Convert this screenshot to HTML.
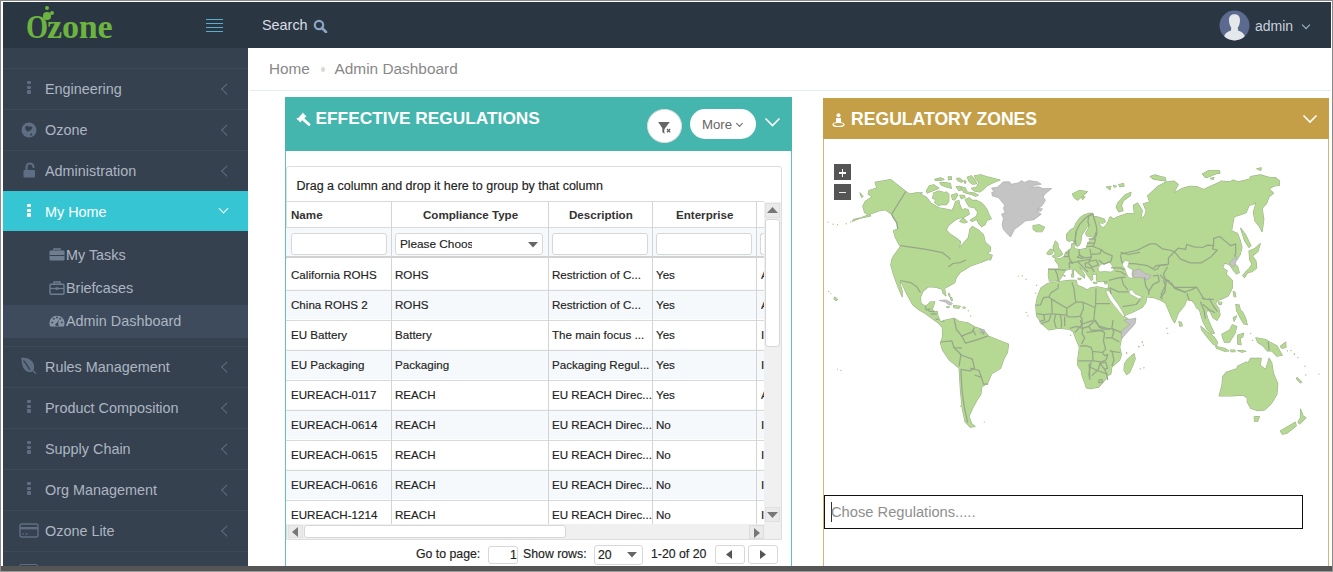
<!DOCTYPE html>
<html><head><meta charset="utf-8">
<style>
*{box-sizing:border-box;margin:0;padding:0}
html,body{width:1333px;height:572px;overflow:hidden;background:#fff;font-family:"Liberation Sans",sans-serif}
.abs{position:absolute}
#frame{position:absolute;left:0;top:0;width:1333px;height:572px;background:#fff;overflow:hidden}
#header{position:absolute;left:3px;top:2px;width:1328px;height:46px;background:#2b3643}
#sidebar{position:absolute;left:3px;top:48px;width:245px;height:518px;background:#364150;overflow:hidden}
.mi{position:absolute;left:0;width:245px;height:41px;border-top:1px solid #3d4957;color:#adb6c2;font-size:14.4px}
.mi .t{position:absolute;left:42px;top:12px;white-space:nowrap}
.mi .ch{position:absolute;left:219.5px;top:15.5px;width:7.5px;height:7.5px;border-left:1.1px solid #5f6e82;border-bottom:1.1px solid #5f6e82;transform:rotate(45deg)}
.dots{position:absolute;left:24px;top:12px;width:4px}
.dots i{display:block;width:3.6px;height:3.4px;background:#5f6e82;margin-bottom:1.2px;border-radius:1px}
.sub{position:absolute;left:0;width:245px;height:33px;color:#adb6c2;font-size:14.4px}
.sub .t{position:absolute;left:63px;top:8px;white-space:nowrap}
.g{position:absolute;font-size:11.6px;color:#222;white-space:nowrap;-webkit-text-stroke:0.15px #222}
.hd{position:absolute;font-size:11.6px;color:#333;font-weight:bold;white-space:nowrap}
.rowline{position:absolute;left:286px;width:478px;height:1px;background:#d9d9d9}
.vline{position:absolute;width:1px;background:#d4d4d4}
.fin{position:absolute;height:22px;border:1px solid #d8d8d8;border-radius:3px;background:#fff}
#bottomframe{position:absolute;left:0;top:566px;width:1333px;height:5px;background:#555}
</style></head><body><div id="frame">

<div id="header">
  <div class="abs" style="left:23.2px;top:9.2px;font-family:'Liberation Serif',serif;font-weight:bold;font-size:31px;color:#6cb33f;transform:scale(0.915,1.07);transform-origin:0 100%;line-height:36px">O</div>
  <div class="abs" style="left:44px;top:9.2px;font-family:'Liberation Serif',serif;font-weight:bold;font-size:31px;color:#6cb33f;transform:scale(1.10,1.07);transform-origin:0 100%;line-height:36px;letter-spacing:-0.2px">zone</div>
  <div class="abs" style="left:40px;top:10px;width:7.5px;height:7.5px;border-radius:50%;background:#6cb33f"></div>
  <div class="abs" style="left:46.5px;top:8.5px;width:4.6px;height:4.6px;border-radius:50%;background:#6cb33f"></div>
  <div class="abs" style="left:41.5px;top:3.6px;width:4.4px;height:4.4px;border-radius:50%;background:#6cb33f"></div>
  <div class="abs" style="left:203px;top:17px;width:17px;height:1.3px;background:#5aaecb"></div>
  <div class="abs" style="left:203px;top:21px;width:17px;height:1.3px;background:#5aaecb"></div>
  <div class="abs" style="left:203px;top:25px;width:17px;height:1.3px;background:#5aaecb"></div>
  <div class="abs" style="left:203px;top:29px;width:17px;height:1.3px;background:#5aaecb"></div>
  <div class="abs" style="left:259px;top:15px;font-size:14.4px;color:#d9dee4">Search</div>
  <svg class="abs" style="left:310px;top:17px" width="15" height="14" viewBox="0 0 15 14"><circle cx="6" cy="6" r="4.2" fill="none" stroke="#8ba3c4" stroke-width="2.2"/><line x1="9" y1="9" x2="13" y2="13" stroke="#8ba3c4" stroke-width="2.6" stroke-linecap="round"/></svg>
  <svg class="abs" style="left:1216px;top:8px" width="31" height="31" viewBox="0 0 31 31"><defs><clipPath id="av"><circle cx="15.5" cy="15.5" r="15"/></clipPath></defs><circle cx="15.5" cy="15.5" r="15" fill="#5d6a8f"/><g clip-path="url(#av)" fill="#e4e8eb"><path d="M10 10 C10 6 12.5 4.3 15.5 4.3 C18.5 4.3 21 6 21 10 C21 13.5 20 16 18.8 17.5 L19 20.5 C22.5 21.5 25 23 26 27 L26 31 L5 31 L5 27 C6 23 8.5 21.5 12 20.5 L12.2 17.5 C11 16 10 13.5 10 10Z"/></g></svg>
  <div class="abs" style="left:1252px;top:16px;font-size:14px;color:#c6d0dc">admin</div>
  <div class="abs" style="left:1300px;top:20px;width:6px;height:6px;border-right:1.3px solid #a9bcd0;border-bottom:1.3px solid #a9bcd0;transform:rotate(45deg)"></div>
</div>

<div id="sidebar">
  <div class="mi" style="top:20px"><div class="dots"><i></i><i></i><i></i></div><div class="t">Engineering</div><div class="ch"></div></div>
  <div class="mi" style="top:61px">
    <svg class="abs" style="left:18px;top:12px" width="16" height="16" viewBox="0 0 16 16"><circle cx="8" cy="8" r="7.5" fill="#5f6e82"/><path d="M4.1 5 L6.6 3.6 L7.8 5.2 L9.1 4 L11.6 5.4 L10 7.9 L6.6 9.8 L4.5 7.6Z" fill="#364150"/><circle cx="10.2" cy="12.6" r="1.1" fill="#364150"/></svg>
    <div class="t">Ozone</div><div class="ch"></div></div>
  <div class="mi" style="top:102px">
    <svg class="abs" style="left:20px;top:11px" width="13" height="16" viewBox="0 0 13 16"><path d="M3.5 8 V5 A3.5 3.5 0 0 1 10.5 5 V6" fill="none" stroke="#5f6e82" stroke-width="2"/><rect x="0.5" y="8" width="11.5" height="7.5" rx="1" fill="#5f6e82"/></svg>
    <div class="t">Administration</div><div class="ch"></div></div>
  <div class="mi" style="top:143px;height:40px;background:#36c6d3;border-top-color:#36c6d3;color:#fff"><div class="dots" style="left:24px"><i style="background:#fff"></i><i style="background:#fff"></i><i style="background:#fff"></i></div><div class="t">My Home</div>
    <div class="abs" style="left:217px;top:13.2px;width:7px;height:7px;border-right:1.9px solid #fff;border-bottom:1.9px solid #fff;transform:rotate(45deg)"></div></div>
  <div class="sub" style="top:191px">
    <svg class="abs" style="left:46px;top:9px" width="16" height="13" viewBox="0 0 16 13"><path d="M5 2.5 V1 H11 V2.5" fill="none" stroke="#6f7d91" stroke-width="1.4"/><rect x="0.5" y="2.5" width="15" height="10" rx="1" fill="#6f7d91"/><rect x="0.5" y="7" width="15" height="1" fill="#364150"/></svg>
    <div class="t">My Tasks</div></div>
  <div class="sub" style="top:224px">
    <svg class="abs" style="left:46px;top:9px" width="16" height="14" viewBox="0 0 16 14"><path d="M5 3 V1 H11 V3" fill="none" stroke="#6f7d91" stroke-width="1.3"/><rect x="1" y="3.2" width="14" height="10" rx="1" fill="none" stroke="#6f7d91" stroke-width="1.4"/><line x1="1" y1="7.5" x2="15" y2="7.5" stroke="#6f7d91" stroke-width="1.2"/><rect x="6.5" y="6.3" width="3" height="2.5" fill="#6f7d91"/></svg>
    <div class="t">Briefcases</div></div>
  <div class="sub" style="top:257px;background:#3e4b5c">
    <svg class="abs" style="left:46px;top:10px" width="16" height="12" viewBox="0 0 16 12"><path d="M1.3 11.5 A7.5 7.5 0 1 1 14.7 11.5Z" fill="#8794a8"/><circle cx="3.2" cy="7.5" r="1" fill="#3e4b5c"/><circle cx="4.8" cy="3.8" r="1" fill="#3e4b5c"/><circle cx="8" cy="2.4" r="1" fill="#3e4b5c"/><circle cx="11.2" cy="3.8" r="1" fill="#3e4b5c"/><circle cx="12.8" cy="7.5" r="1" fill="#3e4b5c"/><path d="M8.8 9 L10.2 4 L7.2 9Z" fill="#3e4b5c"/><circle cx="8" cy="9.6" r="1.7" fill="#3e4b5c"/></svg>
    <div class="t">Admin Dashboard</div></div>
  <div class="mi" style="top:298px">
    <svg class="abs" style="left:17px;top:10px" width="18" height="18" viewBox="0 0 18 18"><path d="M1 1 C9 0 15 4 14 12 C13 16 8 16 5 13 C2 10 2 5 1 1Z" fill="#5f6e82"/><path d="M3.5 3.5 C6 6 8 10 10 13" fill="none" stroke="#364150" stroke-width="1.2"/><line x1="12" y1="13" x2="16" y2="16.5" stroke="#5f6e82" stroke-width="1.3"/></svg>
    <div class="t">Rules Management</div><div class="ch"></div></div>
  <div class="mi" style="top:339px"><div class="dots"><i></i><i></i><i></i></div><div class="t">Product Composition</div><div class="ch"></div></div>
  <div class="mi" style="top:380px"><div class="dots"><i></i><i></i><i></i></div><div class="t">Supply Chain</div><div class="ch"></div></div>
  <div class="mi" style="top:421px"><div class="dots"><i></i><i></i><i></i></div><div class="t">Org Management</div><div class="ch"></div></div>
  <div class="mi" style="top:462px">
    <svg class="abs" style="left:16px;top:12px" width="20" height="15" viewBox="0 0 20 15"><rect x="1" y="1" width="18" height="13" rx="1.5" fill="none" stroke="#5f6e82" stroke-width="1.4"/><rect x="1" y="4" width="18" height="2.4" fill="#5f6e82"/><rect x="3" y="10.5" width="2" height="1" fill="#5f6e82"/><rect x="6" y="10.5" width="3" height="1" fill="#5f6e82"/></svg>
    <div class="t">Ozone Lite</div><div class="ch"></div></div>
  <div class="mi" style="top:503px">
    <div class="abs" style="left:16px;top:12px;width:19px;height:10px;border:1.4px solid #5f6e82;border-radius:2px"></div></div>
</div>

<!-- breadcrumb -->
<div class="abs" style="left:269px;top:60px;font-size:15.3px;color:#888">Home</div>
<div class="abs" style="left:320.5px;top:67px;width:4.5px;height:4.5px;border-radius:50%;background:#dadada"></div>
<div class="abs" style="left:334.5px;top:60px;font-size:15.4px;color:#888">Admin Dashboard</div>
<div class="abs" style="left:250px;top:90px;width:1081px;height:1px;background:#e7ecf1"></div>

<!-- effective regulations portlet -->
<div class="abs" style="left:285px;top:97px;width:507px;height:475px;border:1px solid #62c1ba;border-top:0"></div>
<div class="abs" style="left:285px;top:97px;width:507px;height:54px;background:#44b6ae"></div>
<svg class="abs" style="left:290px;top:105px" width="30" height="30" viewBox="0 0 30 30"><path d="M6.3 13.4 L8.5 12.8 L12.3 8.6 L12.6 7.6 L16.5 11.6 L15.4 12.2 L11.2 16.2 L10.5 17.6Z" fill="#fff"/><line x1="13.6" y1="14.6" x2="19" y2="19.5" stroke="#fff" stroke-width="2.8" stroke-linecap="round"/></svg>
<div class="abs" style="left:315.5px;top:107.9px;font-size:17.3px;color:#fff;font-weight:bold">EFFECTIVE REGULATIONS</div>
<div class="abs" style="left:647px;top:109px;width:35px;height:34px;border-radius:50%;background:#fff;border:1px solid #e0dcdc"></div>
<svg class="abs" style="left:650px;top:112px" width="30" height="28" viewBox="0 0 30 28"><path d="M8.1 10 H19.8 L15.2 16 H12.3Z" fill="#666"/><path d="M12.3 15.5 H15.2 L14.6 17.2 C13.9 18.2 14 19.8 14.9 21.4 C13.6 21.4 12.3 20.6 12.3 19.5Z" fill="#666"/><path d="M16.9 17 L20.2 20.3 M20.2 17 L16.9 20.3" stroke="#666" stroke-width="1.3"/></svg>
<div class="abs" style="left:690px;top:109px;width:66px;height:30px;border-radius:15px;background:#fff"></div>
<div class="abs" style="left:702px;top:117px;font-size:13.2px;color:#666">More</div>
<div class="abs" style="left:737px;top:121px;width:5px;height:5px;border-right:1.2px solid #666;border-bottom:1.2px solid #666;transform:rotate(45deg)"></div>
<svg class="abs" style="left:764px;top:117px" width="17" height="11" viewBox="0 0 17 11"><path d="M1.5 1.5 L8.5 8.5 L15.5 1.5" fill="none" stroke="#fff" stroke-width="1.6"/></svg>

<!-- grid -->
<div class="abs" style="left:286px;top:166px;width:496px;height:374px;border:1px solid #dedede;border-radius:3px 3px 0 0"></div>
<div class="g" style="left:296.5px;top:178.5px;font-size:12.5px">Drag a column and drop it here to group by that column</div>
<div class="abs" style="left:286px;top:201px;width:478px;height:1px;background:#dadada"></div>
<div class="hd" style="left:291px;top:208px">Name</div>
<div class="hd" style="left:423px;top:208px">Compliance Type</div>
<div class="hd" style="left:569px;top:208px">Description</div>
<div class="hd" style="left:676px;top:208px">Enterprise</div>
<div class="abs" style="left:286px;top:227px;width:478px;height:31px;background:#f5f9fb;border-top:1px solid #dadada;border-bottom:2px solid #d2d2d2"></div>
<div class="fin" style="left:291px;top:233px;width:96px"></div>
<div class="fin" style="left:395px;top:233px;width:148px"></div>
<div class="g" style="left:400px;top:237px;font-size:11.8px">Please Choo<span style="display:inline-block;width:4px;overflow:hidden;vertical-align:top">s</span></div>
<svg class="abs" style="left:528px;top:242px" width="10" height="6" viewBox="0 0 10 6"><path d="M0 0 H10 L5 5.5Z" fill="#666"/></svg>
<div class="fin" style="left:552px;top:233px;width:96px"></div>
<div class="fin" style="left:656px;top:233px;width:96px"></div>
<div class="fin" style="left:760px;top:233px;width:8px;border-right:0;border-radius:3px 0 0 3px"></div>
<div class="abs" style="left:286px;top:259px;width:478px;height:31px;background:#fff"></div>
<div class="abs" style="left:286px;top:289px;width:478px;height:31px;background:#f5f9fb"></div>
<div class="abs" style="left:286px;top:319px;width:478px;height:31px;background:#fff"></div>
<div class="abs" style="left:286px;top:349px;width:478px;height:31px;background:#f5f9fb"></div>
<div class="abs" style="left:286px;top:379px;width:478px;height:31px;background:#fff"></div>
<div class="abs" style="left:286px;top:409px;width:478px;height:31px;background:#f5f9fb"></div>
<div class="abs" style="left:286px;top:439px;width:478px;height:31px;background:#fff"></div>
<div class="abs" style="left:286px;top:469px;width:478px;height:31px;background:#f5f9fb"></div>
<div class="abs" style="left:286px;top:499px;width:478px;height:25px;background:#fff"></div>
<div class="rowline" style="top:290px"></div>
<div class="rowline" style="top:320px"></div>
<div class="rowline" style="top:350px"></div>
<div class="rowline" style="top:380px"></div>
<div class="rowline" style="top:410px"></div>
<div class="rowline" style="top:440px"></div>
<div class="rowline" style="top:470px"></div>
<div class="rowline" style="top:500px"></div>
<div class="g" style="left:291px;top:268px">California ROHS</div>
<div class="g" style="left:395px;top:268px">ROHS</div>
<div class="g" style="left:552px;top:268px">Restriction of C...</div>
<div class="g" style="left:656px;top:268px">Yes</div>
<div class="g" style="left:761px;top:268px;width:3px;overflow:hidden">A</div>
<div class="g" style="left:291px;top:298px">China ROHS 2</div>
<div class="g" style="left:395px;top:298px">ROHS</div>
<div class="g" style="left:552px;top:298px">Restriction of C...</div>
<div class="g" style="left:656px;top:298px">Yes</div>
<div class="g" style="left:761px;top:298px;width:3px;overflow:hidden">A</div>
<div class="g" style="left:291px;top:328px">EU Battery</div>
<div class="g" style="left:395px;top:328px">Battery</div>
<div class="g" style="left:552px;top:328px">The main focus ...</div>
<div class="g" style="left:656px;top:328px">Yes</div>
<div class="g" style="left:761px;top:328px;width:3px;overflow:hidden">I</div>
<div class="g" style="left:291px;top:358px">EU Packaging</div>
<div class="g" style="left:395px;top:358px">Packaging</div>
<div class="g" style="left:552px;top:358px">Packaging Regul...</div>
<div class="g" style="left:656px;top:358px">Yes</div>
<div class="g" style="left:761px;top:358px;width:3px;overflow:hidden">I</div>
<div class="g" style="left:291px;top:388px">EUREACH-0117</div>
<div class="g" style="left:395px;top:388px">REACH</div>
<div class="g" style="left:552px;top:388px">EU REACH Direc...</div>
<div class="g" style="left:656px;top:388px">Yes</div>
<div class="g" style="left:761px;top:388px;width:3px;overflow:hidden">A</div>
<div class="g" style="left:291px;top:418px">EUREACH-0614</div>
<div class="g" style="left:395px;top:418px">REACH</div>
<div class="g" style="left:552px;top:418px">EU REACH Direc...</div>
<div class="g" style="left:656px;top:418px">No</div>
<div class="g" style="left:761px;top:418px;width:3px;overflow:hidden">I</div>
<div class="g" style="left:291px;top:448px">EUREACH-0615</div>
<div class="g" style="left:395px;top:448px">REACH</div>
<div class="g" style="left:552px;top:448px">EU REACH Direc...</div>
<div class="g" style="left:656px;top:448px">No</div>
<div class="g" style="left:761px;top:448px;width:3px;overflow:hidden">I</div>
<div class="g" style="left:291px;top:478px">EUREACH-0616</div>
<div class="g" style="left:395px;top:478px">REACH</div>
<div class="g" style="left:552px;top:478px">EU REACH Direc...</div>
<div class="g" style="left:656px;top:478px">No</div>
<div class="g" style="left:761px;top:478px;width:3px;overflow:hidden">I</div>
<div class="g" style="left:291px;top:508px">EUREACH-1214</div>
<div class="g" style="left:395px;top:508px">REACH</div>
<div class="g" style="left:552px;top:508px">EU REACH Direc...</div>
<div class="g" style="left:656px;top:508px">No</div>
<div class="g" style="left:761px;top:508px;width:3px;overflow:hidden">I</div>
<!-- vertical col lines -->
<div class="vline" style="left:391px;top:202px;height:322px"></div>
<div class="vline" style="left:548px;top:202px;height:322px"></div>
<div class="vline" style="left:652px;top:202px;height:322px"></div>
<div class="vline" style="left:756px;top:202px;height:322px"></div>
<!-- v scrollbar -->
<div class="abs" style="left:764px;top:202px;width:17px;height:322px;background:#f0f0f0"></div>
<div class="abs" style="left:765px;top:203px;width:15px;height:15px;background:#eaeaea;border:1px solid #e0e0e0"></div>
<svg class="abs" style="left:767px;top:207px" width="11" height="6" viewBox="0 0 11 6"><path d="M0 6 H11 L5.5 0Z" fill="#777"/></svg>
<div class="abs" style="left:765px;top:219px;width:15px;height:128px;background:#fff;border:1px solid #d6d6d6;border-radius:3px"></div>
<div class="abs" style="left:765px;top:507px;width:15px;height:15px;background:#eaeaea;border:1px solid #e0e0e0"></div>
<svg class="abs" style="left:767px;top:512px" width="11" height="6" viewBox="0 0 11 6"><path d="M0 0 H11 L5.5 6Z" fill="#777"/></svg>
<!-- h scrollbar -->
<div class="abs" style="left:287px;top:524px;width:494px;height:15px;background:#f0f0f0"></div>
<div class="abs" style="left:288px;top:525px;width:15px;height:13px;background:#eaeaea;border:1px solid #e0e0e0"></div>
<svg class="abs" style="left:292px;top:527px" width="6" height="10" viewBox="0 0 6 10"><path d="M6 0 V10 L0 5Z" fill="#777"/></svg>
<div class="abs" style="left:304px;top:525px;width:262px;height:13px;background:#fff;border:1px solid #d6d6d6;border-radius:3px"></div>
<div class="abs" style="left:749px;top:525px;width:15px;height:14px;background:#eaeaea;border:1px solid #dcdcdc"></div>
<svg class="abs" style="left:754px;top:527.5px" width="6" height="10" viewBox="0 0 6 10"><path d="M0 0 V10 L6 5Z" fill="#777"/></svg>
<!-- pager -->
<div class="g" style="left:416px;top:547px;font-size:12.3px">Go to page:</div>
<div class="fin" style="left:488px;top:546px;width:30px;height:18px"></div>
<div class="g" style="left:510px;top:548px;font-size:12.3px">1</div>
<div class="g" style="left:523px;top:547px;font-size:12.3px">Show rows:</div>
<div class="fin" style="left:594px;top:545px;width:49px;height:20px"></div>
<div class="g" style="left:598px;top:548px;font-size:12.3px">20</div>
<svg class="abs" style="left:627px;top:552px" width="10" height="6" viewBox="0 0 10 6"><path d="M0 0 H10 L5 5.5Z" fill="#666"/></svg>
<div class="g" style="left:651px;top:547px;font-size:12.3px">1-20 of 20</div>
<div class="fin" style="left:715px;top:545px;width:30px;height:19px"></div>
<svg class="abs" style="left:726px;top:550px" width="6" height="9" viewBox="0 0 6 9"><path d="M6 0 V9 L0 4.5Z" fill="#555"/></svg>
<div class="fin" style="left:748px;top:545px;width:30px;height:19px"></div>
<svg class="abs" style="left:760px;top:550px" width="6" height="9" viewBox="0 0 6 9"><path d="M0 0 V9 L6 4.5Z" fill="#555"/></svg>

<!-- regulatory zones portlet -->
<div class="abs" style="left:823px;top:98px;width:506px;height:474px;border:1px solid #d2b672;border-top:0"></div>
<div class="abs" style="left:823px;top:98px;width:506px;height:41px;background:#c49f47"></div>
<svg class="abs" style="left:832px;top:113px" width="13" height="14" viewBox="0 0 13 14"><circle cx="6.5" cy="2.2" r="2" fill="#fff"/><path d="M4 5 H9 V10 H4Z" fill="#fff"/><ellipse cx="6.5" cy="11.5" rx="5.5" ry="2" fill="none" stroke="#fff" stroke-width="1.2"/></svg>
<div class="abs" style="left:851px;top:108.5px;font-size:17.6px;color:#fff;font-weight:bold">REGULATORY ZONES</div>
<svg class="abs" style="left:1302px;top:114px" width="16" height="10" viewBox="0 0 16 10"><path d="M1.5 1.5 L8 8 L14.5 1.5" fill="none" stroke="#fff" stroke-width="1.6"/></svg>
<div class="abs" style="left:834px;top:164px;width:17px;height:16px;background:#555"></div>
<div class="abs" style="left:838.8px;top:172.3px;width:7.6px;height:1.3px;background:#fff"></div>
<div class="abs" style="left:842px;top:169.2px;width:1.3px;height:7.4px;background:#fff"></div>
<div class="abs" style="left:834px;top:184px;width:17px;height:16px;background:#555"></div>
<div class="abs" style="left:838.8px;top:192px;width:7.6px;height:1.3px;background:#eee"></div>
<svg class="abs" style="left:0;top:0" width="1333" height="572" viewBox="0 0 1333 572">
<g fill="#b5d892" stroke="#9db28a" stroke-width="1.1" stroke-linejoin="round"><path d="M875.1 182.4 L890.8 179.6 L905.7 191.5 L910.0 194.1 L916.2 192.9 L922.3 192.7 L920.0 194.1 L926.3 197.3 L931.5 203.5 L938.9 207.7 L944.1 208.8 L949.4 209.8 L951.4 210.9 L953.5 207.7 L955.6 201.4 L958.8 200.4 L959.8 204.6 L961.9 209.8 L965.1 208.8 L968.2 209.8 L969.3 214.0 L964.0 217.2 L958.8 218.2 L954.6 220.3 L948.3 225.6 L946.2 229.9 L950.2 234.3 L956.4 238.3 L960.7 241.8 L959.0 248.3 L962.5 244.3 L968.3 237.8 L970.0 229.1 L972.4 226.4 L978.2 229.9 L983.5 234.8 L985.2 242.2 L990.5 247.1 L990.5 250.9 L987.0 253.5 L985.2 257.0 L987.0 260.0 L982.6 261.7 L974.7 264.4 L970.3 266.1 L966.0 268.7 L959.9 272.6 L956.4 277.5 L954.6 282.7 L948.5 286.2 L944.5 288.3 L945.9 295.8 L943.0 293.1 L941.9 288.9 L935.6 287.3 L928.3 286.8 L923.1 291.0 L920.4 297.3 L921.0 303.5 L925.2 306.2 L928.1 304.6 L929.9 302.0 L934.8 301.7 L933.3 306.7 L932.0 309.3 L935.1 311.9 L937.2 311.4 L937.9 316.1 L940.4 321.4 L945.3 322.4 L942.7 320.9 L954.1 318.2 L959.8 321.6 L967.7 322.7 L974.5 326.8 L983.6 330.0 L988.2 335.9 L997.3 339.8 L1008.6 344.3 L1007.5 352.3 L1003.6 359.5 L1000.7 368.2 L991.6 373.9 L987.7 383.0 L981.8 386.8 L980.9 394.3 L976.8 400.5 L972.7 408.0 L968.9 416.4 L971.8 423.9 L975.0 426.4 L970.5 427.3 L965.0 421.6 L962.0 406.8 L960.5 390.9 L959.1 368.2 L949.5 360.2 L942.7 350.5 L940.5 343.2 L942.7 336.4 L942.3 327.3 L938.2 322.7 L934.6 320.3 L926.2 314.0 L918.9 309.8 L912.6 304.6 L906.3 293.1 L902.1 283.6 L899.5 281.0 L902.2 291.5 L902.2 296.7 L897.8 286.2 L895.2 279.2 L893.4 274.0 L890.8 265.2 L891.7 260.0 L893.4 256.2 L900.4 246.5 L897.8 242.2 L895.2 236.9 L893.4 230.8 L897.8 229.1 L896.9 222.9 L893.4 217.7 L891.7 214.2 L885.6 209.8 L879.4 210.7 L872.4 213.3 L863.7 216.8 L852.3 221.2 L854.1 219.4 L870.7 215.9 L864.6 212.4 L862.8 206.3 L865.5 201.1 L872.4 196.7 L868.1 194.1 L869.0 190.6 L876.8 188.0Z"/><path d="M926.3 191.0 L929.4 185.7 L933.6 184.7 L938.9 188.3 L934.7 189.9 L929.4 192.0 L927.3 193.1Z"/><path d="M933.6 193.1 L938.9 191.0 L944.1 192.5 L946.2 192.0 L948.8 194.1 L948.8 201.4 L946.2 204.6 L941.0 204.6 L938.9 205.6 L934.7 202.5 L935.7 199.4 L932.6 198.3Z"/><path d="M934.7 179.4 L941.0 177.9 L944.1 179.4 L940.4 180.5 L935.7 180.5Z"/><path d="M939.9 182.6 L945.2 182.6 L950.4 183.6 L951.4 188.3 L947.3 187.3 L943.1 185.7 L941.0 184.7Z"/><path d="M948.3 176.8 L951.4 176.8 L951.4 179.4 L948.5 179.6Z"/><path d="M951.4 195.2 L956.7 193.6 L957.7 195.2 L954.6 199.9 L952.5 199.4Z"/><path d="M956.7 178.4 L959.8 178.4 L963.0 181.5 L960.9 182.1 L957.7 180.5Z"/><path d="M964.0 180.5 L966.1 181.5 L965.1 183.6Z"/><path d="M956.2 186.8 L959.8 186.2 L961.4 189.9 L958.8 190.4Z"/><path d="M960.9 186.8 L965.1 187.8 L967.2 192.0 L974.5 193.1 L978.2 195.2 L975.6 196.2 L970.3 194.1 L964.0 192.5Z"/><path d="M959.8 195.2 L964.0 195.2 L965.1 197.3 L961.4 198.8Z"/><path d="M967.2 177.3 L971.4 175.8 L974.5 179.4 L976.6 183.6 L972.4 184.2 L969.3 181.5Z"/><path d="M974.5 175.8 L980.8 174.7 L987.1 176.8 L1000.0 180.0 L993.4 182.6 L987.1 185.7 L983.9 188.9 L979.7 192.0 L974.5 191.0 L971.4 188.3 L976.6 187.3 L978.7 182.6 L975.6 178.4Z"/><path d="M965.1 199.4 L969.3 197.8 L972.4 200.4 L976.6 200.4 L980.8 202.5 L985.0 206.7 L987.1 209.8 L989.2 215.1 L991.3 218.7 L987.1 220.3 L985.0 224.5 L981.8 226.6 L978.7 223.5 L976.6 219.3 L972.4 221.4 L970.3 220.3 L976.6 216.1 L977.7 211.9 L974.5 207.7 L969.3 206.7 L967.2 203.5Z"/><path d="M959.8 221.4 L963.0 218.2 L967.2 221.9 L964.0 222.9Z"/><path d="M859.9 192.9 L863.0 196.4 L861.6 197.2Z"/><path d="M984.3 252.7 L992.2 255.3 L990.5 260.0 L985.2 258.8Z"/><path d="M1033.1 225.6 L1039.2 224.7 L1044.5 227.3 L1041.9 231.7 L1036.6 231.7 L1033.1 229.1Z"/><path d="M1072.4 194.1 L1079.4 190.6 L1087.3 191.5 L1084.7 194.1 L1077.7 200.2 L1074.2 197.6Z"/><path d="M1081.2 196.4 L1085.0 197.1 L1082.6 199.3Z"/><path d="M1106.5 187.1 L1110.9 186.2 L1110.0 189.7Z"/><path d="M1113.5 185.3 L1116.5 186.2 L1114.4 187.3Z"/><path d="M1118.8 184.5 L1123.5 183.6 L1124.0 186.2 L1119.7 186.6Z"/><path d="M1117.9 202.8 L1124.9 195.0 L1131.0 192.3 L1130.1 195.8 L1123.5 200.6 L1121.4 205.8 L1123.1 210.7 L1118.8 211.6 L1116.2 207.2Z"/><path d="M1150.2 176.6 L1154.6 174.9 L1160.7 176.6 L1165.1 177.5 L1166.0 181.0 L1159.9 180.1 L1153.7 179.2Z"/><path d="M1202.7 174.0 L1208.8 170.5 L1219.3 170.5 L1220.0 173.1 L1212.3 174.0 L1205.3 177.5Z"/><path d="M1202.6 174.0 L1210.5 170.5 L1218.4 171.4 L1216.6 173.6 L1207.0 177.5Z"/><path d="M1210.5 178.4 L1214.0 177.5 L1213.1 179.6Z"/><path d="M1256.8 168.7 L1261.2 167.9 L1260.8 170.5Z"/><path d="M1055.2 241.0 L1057.8 243.6 L1058.3 247.8 L1061.4 252.0 L1062.5 254.3 L1059.4 256.2 L1053.6 257.5 L1052.5 256.2 L1055.7 254.3 L1054.3 251.5 L1053.1 246.8 L1054.6 243.6Z"/><path d="M1046.8 253.3 L1050.4 249.1 L1053.3 250.1 L1052.0 253.9 L1048.3 254.7Z"/><path d="M1072.3 270.4 L1073.3 270.4 L1073.3 273.5 L1072.3 273.5Z"/><path d="M1071.6 274.2 L1073.6 274.2 L1073.5 277.0 L1071.8 277.0Z"/><path d="M1077.9 278.3 L1081.0 278.4 L1080.3 279.8 L1078.2 279.4Z"/><path d="M1093.3 282.3 L1097.0 282.5 L1096.6 283.3 L1093.6 283.2Z"/><path d="M1104.5 282.6 L1106.9 282.9 L1106.4 284.0 L1104.8 283.7Z"/><path d="M1063.7 275.5 L1065.1 275.6 L1064.8 276.3Z"/><path d="M1107.4 288.0 L1109.2 292.3 L1114.4 300.2 L1121.4 310.7 L1124.0 316.3 L1130.1 320.8 L1135.4 319.1 L1132.8 325.6 L1124.9 333.4 L1121.4 338.7 L1119.7 347.4 L1121.4 354.4 L1119.7 360.0 L1117.9 361.7 L1111.8 367.0 L1110.9 374.0 L1107.4 375.7 L1105.7 379.2 L1098.7 387.1 L1089.9 388.8 L1086.4 388.0 L1084.7 382.7 L1082.1 375.7 L1081.2 370.5 L1077.7 365.2 L1077.7 360.0 L1079.4 347.4 L1075.9 338.7 L1073.3 331.7 L1069.0 329.1 L1058.5 328.2 L1048.8 329.9 L1042.7 324.7 L1036.6 315.9 L1035.7 305.5 L1037.5 296.7 L1041.0 288.0 L1048.0 283.2 L1058.5 281.8 L1069.0 280.4 L1076.0 280.2 L1077.4 285.3 L1083.0 287.4 L1087.2 290.2 L1090.0 288.1 L1097.0 286.7 L1106.7 288.8Z"/><path d="M1108.8 288.8 L1108.1 283.2 L1107.4 281.1 L1101.1 281.8 L1097.0 281.1 L1096.3 277.6 L1097.0 274.1 L1094.2 274.1 L1092.1 274.8 L1092.8 279.0 L1091.4 280.4 L1090.0 278.3 L1087.2 274.8 L1085.8 272.0 L1080.9 267.8 L1078.1 265.7 L1081.6 270.6 L1084.7 274.8 L1084.4 277.9 L1082.3 276.2 L1078.8 273.4 L1076.0 270.6 L1073.2 268.8 L1069.0 269.2 L1065.1 270.6 L1062.0 276.2 L1059.2 280.4 L1049.4 281.1 L1048.3 275.5 L1048.7 269.2 L1059.2 268.8 L1058.5 265.0 L1055.0 260.1 L1055.7 258.0 L1060.4 258.8 L1064.1 256.5 L1065.5 253.0 L1069.0 249.8 L1071.1 248.8 L1071.8 243.8 L1073.7 243.5 L1074.2 248.1 L1075.3 248.8 L1079.5 249.8 L1086.5 248.4 L1087.2 244.9 L1087.9 242.8 L1090.0 241.4 L1090.0 239.3 L1091.4 238.6 L1096.3 237.9 L1095.6 237.2 L1091.4 236.8 L1086.5 235.8 L1085.8 233.0 L1088.6 228.1 L1089.3 226.0 L1087.2 226.7 L1084.4 230.9 L1081.6 235.1 L1080.9 241.4 L1079.5 244.9 L1077.4 246.3 L1075.3 244.9 L1074.6 242.8 L1072.5 240.0 L1069.0 241.4 L1066.9 240.0 L1066.5 234.4 L1071.1 229.5 L1073.9 228.1 L1076.0 223.2 L1079.5 218.3 L1084.4 214.8 L1088.6 213.4 L1092.8 213.4 L1093.8 216.2 L1097.0 216.9 L1104.0 219.0 L1105.3 221.8 L1102.6 223.2 L1098.4 222.5 L1100.5 226.0 L1103.3 228.1 L1106.0 225.3 L1108.8 220.4 L1109.5 217.6 L1110.9 216.9 L1113.0 219.0 L1115.0 218.3 L1117.7 216.8 L1127.1 213.6 L1134.4 213.6 L1133.4 205.2 L1137.6 203.1 L1142.4 210.7 L1140.6 218.6 L1144.5 216.3 L1146.2 210.7 L1143.3 203.7 L1149.7 202.0 L1147.6 195.8 L1158.1 186.2 L1165.1 182.4 L1173.8 181.0 L1178.2 184.5 L1173.5 193.2 L1182.6 188.3 L1189.6 186.2 L1196.6 186.6 L1203.6 189.4 L1210.6 186.2 L1220.0 181.9 L1221.0 181.0 L1229.7 181.9 L1233.2 180.1 L1238.5 181.9 L1249.0 179.2 L1250.7 176.6 L1260.3 174.9 L1269.9 177.5 L1275.2 177.5 L1279.5 181.0 L1279.5 185.3 L1273.4 186.2 L1269.1 188.8 L1273.4 193.2 L1269.1 196.7 L1266.4 203.7 L1262.1 208.1 L1263.8 219.4 L1262.1 231.7 L1259.4 226.4 L1255.1 221.2 L1253.3 212.4 L1256.3 201.6 L1254.2 203.7 L1249.0 205.5 L1246.3 212.4 L1242.0 214.2 L1234.1 216.8 L1232.3 226.4 L1231.5 230.8 L1237.6 233.4 L1240.2 240.4 L1242.0 247.4 L1240.2 254.4 L1236.7 260.0 L1235.8 260.0 L1234.1 263.1 L1237.6 266.6 L1239.3 272.6 L1236.4 274.0 L1232.3 268.7 L1229.4 264.4 L1224.5 263.1 L1222.7 267.9 L1227.1 270.8 L1226.2 274.0 L1232.3 280.6 L1232.3 288.0 L1228.3 295.8 L1222.4 298.8 L1217.5 300.6 L1215.4 303.7 L1218.9 308.6 L1220.1 315.1 L1217.1 320.3 L1213.1 317.7 L1210.5 312.4 L1207.9 309.8 L1206.1 312.4 L1208.4 320.3 L1211.4 327.3 L1214.3 333.1 L1211.9 333.8 L1207.0 329.1 L1203.1 322.1 L1201.4 316.8 L1200.0 311.6 L1199.2 309.8 L1196.7 307.9 L1194.3 303.0 L1191.8 300.6 L1186.9 299.4 L1184.5 305.5 L1178.4 312.8 L1174.7 322.6 L1172.2 319.0 L1168.6 310.4 L1165.5 303.0 L1161.2 300.6 L1153.7 297.6 L1146.7 296.7 L1145.9 302.0 L1142.4 307.2 L1131.9 312.4 L1124.5 315.6 L1121.4 310.0 L1117.3 305.6 L1113.1 299.3 L1108.3 291.9Z"/><path d="M1240.6 228.2 L1245.8 235.2 L1251.0 245.7 L1249.0 247.4 L1244.6 240.8Z"/><path d="M1249.0 250.9 L1254.5 248.8 L1260.3 243.6 L1258.0 251.3 L1252.4 256.2 L1255.9 260.9 L1256.8 267.9 L1252.4 271.4 L1247.2 273.1 L1244.6 277.5 L1242.8 275.7 L1246.3 271.4 L1249.3 268.4 L1252.1 264.4 L1249.8 260.0Z"/><path d="M1233.2 291.5 L1235.0 292.3 L1235.8 296.7 L1234.1 296.7Z"/><path d="M1218.4 302.0 L1221.9 302.3 L1221.0 304.6 L1218.9 304.1Z"/><path d="M1235.8 304.6 L1239.3 305.1 L1240.2 309.8 L1242.8 312.4 L1245.5 317.7 L1247.2 324.7 L1243.7 323.8 L1240.2 317.7 L1236.7 310.7Z"/><path d="M1233.2 317.7 L1236.7 315.9 L1234.1 321.2Z"/><path d="M1221.9 334.3 L1229.7 329.9 L1232.3 324.7 L1236.7 326.4 L1235.0 333.4 L1231.5 338.7 L1229.7 342.2 L1224.5 342.2 L1222.7 337.8Z"/><path d="M1237.6 335.2 L1243.7 333.4 L1242.8 336.9 L1240.2 337.8 L1241.1 344.8 L1237.6 343.9Z"/><path d="M1200.9 326.4 L1207.0 331.7 L1214.0 336.9 L1217.5 342.2 L1216.6 345.7 L1213.1 343.9 L1207.0 336.9 L1201.7 329.9Z"/><path d="M1215.7 346.5 L1224.5 348.3 L1228.8 350.9 L1224.5 351.3 L1216.6 348.3Z"/><path d="M1230.6 350.0 L1235.0 350.0 L1235.0 351.8 L1231.1 351.6Z"/><path d="M1237.6 350.6 L1242.0 350.6 L1245.8 351.3 L1242.0 352.3Z"/><path d="M1255.9 337.8 L1265.6 339.5 L1269.9 342.2 L1276.9 345.7 L1282.2 355.3 L1276.9 356.2 L1271.7 350.9 L1267.3 350.9 L1262.9 345.7 L1257.7 342.2Z"/><path d="M1280.4 346.5 L1285.7 342.2 L1286.0 347.4 L1282.2 348.3Z"/><path d="M1179.0 321.4 L1181.4 322.4 L1182.3 325.7 L1179.8 326.3Z"/><path d="M1124.0 370.3 L1124.5 364.0 L1127.1 359.8 L1132.9 354.6 L1134.2 353.8 L1135.2 358.8 L1132.9 365.1 L1129.7 372.4 L1126.6 374.5Z"/><path d="M1219.2 395.9 L1221.9 385.5 L1222.7 376.7 L1226.2 372.3 L1236.7 368.8 L1237.6 366.2 L1246.3 361.9 L1248.1 362.7 L1250.7 358.4 L1261.2 358.4 L1260.3 365.3 L1265.6 369.7 L1269.1 358.4 L1271.7 362.7 L1273.4 373.2 L1277.8 383.7 L1276.9 394.2 L1271.7 402.9 L1264.7 409.9 L1257.7 410.8 L1250.7 408.2 L1247.2 402.1 L1247.2 397.7 L1242.8 395.1 L1230.6 395.9Z"/><path d="M1254.2 416.9 L1259.4 416.6 L1257.7 421.3 L1254.5 421.3Z"/><path d="M1280.4 430.9 L1295.3 422.2 L1296.2 425.7 L1286.5 433.5 L1282.2 434.1Z"/><path d="M1300.5 409.1 L1303.1 416.0 L1305.8 417.8 L1299.7 423.9 L1297.9 422.2 L1300.5 417.8Z"/><path d="M1297.0 377.6 L1301.4 382.0 L1300.5 382.8 L1296.5 378.8Z"/><path d="M834.9 297.1 L837.5 299.3 L836.1 300.6 L834.0 298.8Z"/><path d="M953.5 305.6 L960.3 306.2 L958.7 308.3 L954.0 307.7Z"/><path d="M946.6 306.7 L949.3 306.9 L948.7 307.7 L947.0 307.5Z"/><path d="M962.9 307.1 L965.0 307.3 L964.8 308.1 L963.1 307.9Z"/><path d="M948.4 293.6 L949.3 293.6 L950.1 296.2 L949.3 296.4Z"/><path d="M950.3 297.5 L951.6 297.5 L952.4 300.4 L951.4 300.6Z"/></g>
<g fill="#b5d892"><path d="M875.1 182.4 L890.8 179.6 L905.7 191.5 L910.0 194.1 L916.2 192.9 L922.3 192.7 L920.0 194.1 L926.3 197.3 L931.5 203.5 L938.9 207.7 L944.1 208.8 L949.4 209.8 L951.4 210.9 L953.5 207.7 L955.6 201.4 L958.8 200.4 L959.8 204.6 L961.9 209.8 L965.1 208.8 L968.2 209.8 L969.3 214.0 L964.0 217.2 L958.8 218.2 L954.6 220.3 L948.3 225.6 L946.2 229.9 L950.2 234.3 L956.4 238.3 L960.7 241.8 L959.0 248.3 L962.5 244.3 L968.3 237.8 L970.0 229.1 L972.4 226.4 L978.2 229.9 L983.5 234.8 L985.2 242.2 L990.5 247.1 L990.5 250.9 L987.0 253.5 L985.2 257.0 L987.0 260.0 L982.6 261.7 L974.7 264.4 L970.3 266.1 L966.0 268.7 L959.9 272.6 L956.4 277.5 L954.6 282.7 L948.5 286.2 L944.5 288.3 L945.9 295.8 L943.0 293.1 L941.9 288.9 L935.6 287.3 L928.3 286.8 L923.1 291.0 L920.4 297.3 L921.0 303.5 L925.2 306.2 L928.1 304.6 L929.9 302.0 L934.8 301.7 L933.3 306.7 L932.0 309.3 L935.1 311.9 L937.2 311.4 L937.9 316.1 L940.4 321.4 L945.3 322.4 L942.7 320.9 L954.1 318.2 L959.8 321.6 L967.7 322.7 L974.5 326.8 L983.6 330.0 L988.2 335.9 L997.3 339.8 L1008.6 344.3 L1007.5 352.3 L1003.6 359.5 L1000.7 368.2 L991.6 373.9 L987.7 383.0 L981.8 386.8 L980.9 394.3 L976.8 400.5 L972.7 408.0 L968.9 416.4 L971.8 423.9 L975.0 426.4 L970.5 427.3 L965.0 421.6 L962.0 406.8 L960.5 390.9 L959.1 368.2 L949.5 360.2 L942.7 350.5 L940.5 343.2 L942.7 336.4 L942.3 327.3 L938.2 322.7 L934.6 320.3 L926.2 314.0 L918.9 309.8 L912.6 304.6 L906.3 293.1 L902.1 283.6 L899.5 281.0 L902.2 291.5 L902.2 296.7 L897.8 286.2 L895.2 279.2 L893.4 274.0 L890.8 265.2 L891.7 260.0 L893.4 256.2 L900.4 246.5 L897.8 242.2 L895.2 236.9 L893.4 230.8 L897.8 229.1 L896.9 222.9 L893.4 217.7 L891.7 214.2 L885.6 209.8 L879.4 210.7 L872.4 213.3 L863.7 216.8 L852.3 221.2 L854.1 219.4 L870.7 215.9 L864.6 212.4 L862.8 206.3 L865.5 201.1 L872.4 196.7 L868.1 194.1 L869.0 190.6 L876.8 188.0Z"/><path d="M926.3 191.0 L929.4 185.7 L933.6 184.7 L938.9 188.3 L934.7 189.9 L929.4 192.0 L927.3 193.1Z"/><path d="M933.6 193.1 L938.9 191.0 L944.1 192.5 L946.2 192.0 L948.8 194.1 L948.8 201.4 L946.2 204.6 L941.0 204.6 L938.9 205.6 L934.7 202.5 L935.7 199.4 L932.6 198.3Z"/><path d="M934.7 179.4 L941.0 177.9 L944.1 179.4 L940.4 180.5 L935.7 180.5Z"/><path d="M939.9 182.6 L945.2 182.6 L950.4 183.6 L951.4 188.3 L947.3 187.3 L943.1 185.7 L941.0 184.7Z"/><path d="M948.3 176.8 L951.4 176.8 L951.4 179.4 L948.5 179.6Z"/><path d="M951.4 195.2 L956.7 193.6 L957.7 195.2 L954.6 199.9 L952.5 199.4Z"/><path d="M956.7 178.4 L959.8 178.4 L963.0 181.5 L960.9 182.1 L957.7 180.5Z"/><path d="M964.0 180.5 L966.1 181.5 L965.1 183.6Z"/><path d="M956.2 186.8 L959.8 186.2 L961.4 189.9 L958.8 190.4Z"/><path d="M960.9 186.8 L965.1 187.8 L967.2 192.0 L974.5 193.1 L978.2 195.2 L975.6 196.2 L970.3 194.1 L964.0 192.5Z"/><path d="M959.8 195.2 L964.0 195.2 L965.1 197.3 L961.4 198.8Z"/><path d="M967.2 177.3 L971.4 175.8 L974.5 179.4 L976.6 183.6 L972.4 184.2 L969.3 181.5Z"/><path d="M974.5 175.8 L980.8 174.7 L987.1 176.8 L1000.0 180.0 L993.4 182.6 L987.1 185.7 L983.9 188.9 L979.7 192.0 L974.5 191.0 L971.4 188.3 L976.6 187.3 L978.7 182.6 L975.6 178.4Z"/><path d="M965.1 199.4 L969.3 197.8 L972.4 200.4 L976.6 200.4 L980.8 202.5 L985.0 206.7 L987.1 209.8 L989.2 215.1 L991.3 218.7 L987.1 220.3 L985.0 224.5 L981.8 226.6 L978.7 223.5 L976.6 219.3 L972.4 221.4 L970.3 220.3 L976.6 216.1 L977.7 211.9 L974.5 207.7 L969.3 206.7 L967.2 203.5Z"/><path d="M959.8 221.4 L963.0 218.2 L967.2 221.9 L964.0 222.9Z"/><path d="M859.9 192.9 L863.0 196.4 L861.6 197.2Z"/><path d="M984.3 252.7 L992.2 255.3 L990.5 260.0 L985.2 258.8Z"/><path d="M1033.1 225.6 L1039.2 224.7 L1044.5 227.3 L1041.9 231.7 L1036.6 231.7 L1033.1 229.1Z"/><path d="M1072.4 194.1 L1079.4 190.6 L1087.3 191.5 L1084.7 194.1 L1077.7 200.2 L1074.2 197.6Z"/><path d="M1081.2 196.4 L1085.0 197.1 L1082.6 199.3Z"/><path d="M1106.5 187.1 L1110.9 186.2 L1110.0 189.7Z"/><path d="M1113.5 185.3 L1116.5 186.2 L1114.4 187.3Z"/><path d="M1118.8 184.5 L1123.5 183.6 L1124.0 186.2 L1119.7 186.6Z"/><path d="M1117.9 202.8 L1124.9 195.0 L1131.0 192.3 L1130.1 195.8 L1123.5 200.6 L1121.4 205.8 L1123.1 210.7 L1118.8 211.6 L1116.2 207.2Z"/><path d="M1150.2 176.6 L1154.6 174.9 L1160.7 176.6 L1165.1 177.5 L1166.0 181.0 L1159.9 180.1 L1153.7 179.2Z"/><path d="M1202.7 174.0 L1208.8 170.5 L1219.3 170.5 L1220.0 173.1 L1212.3 174.0 L1205.3 177.5Z"/><path d="M1202.6 174.0 L1210.5 170.5 L1218.4 171.4 L1216.6 173.6 L1207.0 177.5Z"/><path d="M1210.5 178.4 L1214.0 177.5 L1213.1 179.6Z"/><path d="M1256.8 168.7 L1261.2 167.9 L1260.8 170.5Z"/><path d="M1055.2 241.0 L1057.8 243.6 L1058.3 247.8 L1061.4 252.0 L1062.5 254.3 L1059.4 256.2 L1053.6 257.5 L1052.5 256.2 L1055.7 254.3 L1054.3 251.5 L1053.1 246.8 L1054.6 243.6Z"/><path d="M1046.8 253.3 L1050.4 249.1 L1053.3 250.1 L1052.0 253.9 L1048.3 254.7Z"/><path d="M1072.3 270.4 L1073.3 270.4 L1073.3 273.5 L1072.3 273.5Z"/><path d="M1071.6 274.2 L1073.6 274.2 L1073.5 277.0 L1071.8 277.0Z"/><path d="M1077.9 278.3 L1081.0 278.4 L1080.3 279.8 L1078.2 279.4Z"/><path d="M1093.3 282.3 L1097.0 282.5 L1096.6 283.3 L1093.6 283.2Z"/><path d="M1104.5 282.6 L1106.9 282.9 L1106.4 284.0 L1104.8 283.7Z"/><path d="M1063.7 275.5 L1065.1 275.6 L1064.8 276.3Z"/><path d="M1107.4 288.0 L1109.2 292.3 L1114.4 300.2 L1121.4 310.7 L1124.0 316.3 L1130.1 320.8 L1135.4 319.1 L1132.8 325.6 L1124.9 333.4 L1121.4 338.7 L1119.7 347.4 L1121.4 354.4 L1119.7 360.0 L1117.9 361.7 L1111.8 367.0 L1110.9 374.0 L1107.4 375.7 L1105.7 379.2 L1098.7 387.1 L1089.9 388.8 L1086.4 388.0 L1084.7 382.7 L1082.1 375.7 L1081.2 370.5 L1077.7 365.2 L1077.7 360.0 L1079.4 347.4 L1075.9 338.7 L1073.3 331.7 L1069.0 329.1 L1058.5 328.2 L1048.8 329.9 L1042.7 324.7 L1036.6 315.9 L1035.7 305.5 L1037.5 296.7 L1041.0 288.0 L1048.0 283.2 L1058.5 281.8 L1069.0 280.4 L1076.0 280.2 L1077.4 285.3 L1083.0 287.4 L1087.2 290.2 L1090.0 288.1 L1097.0 286.7 L1106.7 288.8Z"/><path d="M1108.8 288.8 L1108.1 283.2 L1107.4 281.1 L1101.1 281.8 L1097.0 281.1 L1096.3 277.6 L1097.0 274.1 L1094.2 274.1 L1092.1 274.8 L1092.8 279.0 L1091.4 280.4 L1090.0 278.3 L1087.2 274.8 L1085.8 272.0 L1080.9 267.8 L1078.1 265.7 L1081.6 270.6 L1084.7 274.8 L1084.4 277.9 L1082.3 276.2 L1078.8 273.4 L1076.0 270.6 L1073.2 268.8 L1069.0 269.2 L1065.1 270.6 L1062.0 276.2 L1059.2 280.4 L1049.4 281.1 L1048.3 275.5 L1048.7 269.2 L1059.2 268.8 L1058.5 265.0 L1055.0 260.1 L1055.7 258.0 L1060.4 258.8 L1064.1 256.5 L1065.5 253.0 L1069.0 249.8 L1071.1 248.8 L1071.8 243.8 L1073.7 243.5 L1074.2 248.1 L1075.3 248.8 L1079.5 249.8 L1086.5 248.4 L1087.2 244.9 L1087.9 242.8 L1090.0 241.4 L1090.0 239.3 L1091.4 238.6 L1096.3 237.9 L1095.6 237.2 L1091.4 236.8 L1086.5 235.8 L1085.8 233.0 L1088.6 228.1 L1089.3 226.0 L1087.2 226.7 L1084.4 230.9 L1081.6 235.1 L1080.9 241.4 L1079.5 244.9 L1077.4 246.3 L1075.3 244.9 L1074.6 242.8 L1072.5 240.0 L1069.0 241.4 L1066.9 240.0 L1066.5 234.4 L1071.1 229.5 L1073.9 228.1 L1076.0 223.2 L1079.5 218.3 L1084.4 214.8 L1088.6 213.4 L1092.8 213.4 L1093.8 216.2 L1097.0 216.9 L1104.0 219.0 L1105.3 221.8 L1102.6 223.2 L1098.4 222.5 L1100.5 226.0 L1103.3 228.1 L1106.0 225.3 L1108.8 220.4 L1109.5 217.6 L1110.9 216.9 L1113.0 219.0 L1115.0 218.3 L1117.7 216.8 L1127.1 213.6 L1134.4 213.6 L1133.4 205.2 L1137.6 203.1 L1142.4 210.7 L1140.6 218.6 L1144.5 216.3 L1146.2 210.7 L1143.3 203.7 L1149.7 202.0 L1147.6 195.8 L1158.1 186.2 L1165.1 182.4 L1173.8 181.0 L1178.2 184.5 L1173.5 193.2 L1182.6 188.3 L1189.6 186.2 L1196.6 186.6 L1203.6 189.4 L1210.6 186.2 L1220.0 181.9 L1221.0 181.0 L1229.7 181.9 L1233.2 180.1 L1238.5 181.9 L1249.0 179.2 L1250.7 176.6 L1260.3 174.9 L1269.9 177.5 L1275.2 177.5 L1279.5 181.0 L1279.5 185.3 L1273.4 186.2 L1269.1 188.8 L1273.4 193.2 L1269.1 196.7 L1266.4 203.7 L1262.1 208.1 L1263.8 219.4 L1262.1 231.7 L1259.4 226.4 L1255.1 221.2 L1253.3 212.4 L1256.3 201.6 L1254.2 203.7 L1249.0 205.5 L1246.3 212.4 L1242.0 214.2 L1234.1 216.8 L1232.3 226.4 L1231.5 230.8 L1237.6 233.4 L1240.2 240.4 L1242.0 247.4 L1240.2 254.4 L1236.7 260.0 L1235.8 260.0 L1234.1 263.1 L1237.6 266.6 L1239.3 272.6 L1236.4 274.0 L1232.3 268.7 L1229.4 264.4 L1224.5 263.1 L1222.7 267.9 L1227.1 270.8 L1226.2 274.0 L1232.3 280.6 L1232.3 288.0 L1228.3 295.8 L1222.4 298.8 L1217.5 300.6 L1215.4 303.7 L1218.9 308.6 L1220.1 315.1 L1217.1 320.3 L1213.1 317.7 L1210.5 312.4 L1207.9 309.8 L1206.1 312.4 L1208.4 320.3 L1211.4 327.3 L1214.3 333.1 L1211.9 333.8 L1207.0 329.1 L1203.1 322.1 L1201.4 316.8 L1200.0 311.6 L1199.2 309.8 L1196.7 307.9 L1194.3 303.0 L1191.8 300.6 L1186.9 299.4 L1184.5 305.5 L1178.4 312.8 L1174.7 322.6 L1172.2 319.0 L1168.6 310.4 L1165.5 303.0 L1161.2 300.6 L1153.7 297.6 L1146.7 296.7 L1145.9 302.0 L1142.4 307.2 L1131.9 312.4 L1124.5 315.6 L1121.4 310.0 L1117.3 305.6 L1113.1 299.3 L1108.3 291.9Z"/><path d="M1240.6 228.2 L1245.8 235.2 L1251.0 245.7 L1249.0 247.4 L1244.6 240.8Z"/><path d="M1249.0 250.9 L1254.5 248.8 L1260.3 243.6 L1258.0 251.3 L1252.4 256.2 L1255.9 260.9 L1256.8 267.9 L1252.4 271.4 L1247.2 273.1 L1244.6 277.5 L1242.8 275.7 L1246.3 271.4 L1249.3 268.4 L1252.1 264.4 L1249.8 260.0Z"/><path d="M1233.2 291.5 L1235.0 292.3 L1235.8 296.7 L1234.1 296.7Z"/><path d="M1218.4 302.0 L1221.9 302.3 L1221.0 304.6 L1218.9 304.1Z"/><path d="M1235.8 304.6 L1239.3 305.1 L1240.2 309.8 L1242.8 312.4 L1245.5 317.7 L1247.2 324.7 L1243.7 323.8 L1240.2 317.7 L1236.7 310.7Z"/><path d="M1233.2 317.7 L1236.7 315.9 L1234.1 321.2Z"/><path d="M1221.9 334.3 L1229.7 329.9 L1232.3 324.7 L1236.7 326.4 L1235.0 333.4 L1231.5 338.7 L1229.7 342.2 L1224.5 342.2 L1222.7 337.8Z"/><path d="M1237.6 335.2 L1243.7 333.4 L1242.8 336.9 L1240.2 337.8 L1241.1 344.8 L1237.6 343.9Z"/><path d="M1200.9 326.4 L1207.0 331.7 L1214.0 336.9 L1217.5 342.2 L1216.6 345.7 L1213.1 343.9 L1207.0 336.9 L1201.7 329.9Z"/><path d="M1215.7 346.5 L1224.5 348.3 L1228.8 350.9 L1224.5 351.3 L1216.6 348.3Z"/><path d="M1230.6 350.0 L1235.0 350.0 L1235.0 351.8 L1231.1 351.6Z"/><path d="M1237.6 350.6 L1242.0 350.6 L1245.8 351.3 L1242.0 352.3Z"/><path d="M1255.9 337.8 L1265.6 339.5 L1269.9 342.2 L1276.9 345.7 L1282.2 355.3 L1276.9 356.2 L1271.7 350.9 L1267.3 350.9 L1262.9 345.7 L1257.7 342.2Z"/><path d="M1280.4 346.5 L1285.7 342.2 L1286.0 347.4 L1282.2 348.3Z"/><path d="M1179.0 321.4 L1181.4 322.4 L1182.3 325.7 L1179.8 326.3Z"/><path d="M1124.0 370.3 L1124.5 364.0 L1127.1 359.8 L1132.9 354.6 L1134.2 353.8 L1135.2 358.8 L1132.9 365.1 L1129.7 372.4 L1126.6 374.5Z"/><path d="M1219.2 395.9 L1221.9 385.5 L1222.7 376.7 L1226.2 372.3 L1236.7 368.8 L1237.6 366.2 L1246.3 361.9 L1248.1 362.7 L1250.7 358.4 L1261.2 358.4 L1260.3 365.3 L1265.6 369.7 L1269.1 358.4 L1271.7 362.7 L1273.4 373.2 L1277.8 383.7 L1276.9 394.2 L1271.7 402.9 L1264.7 409.9 L1257.7 410.8 L1250.7 408.2 L1247.2 402.1 L1247.2 397.7 L1242.8 395.1 L1230.6 395.9Z"/><path d="M1254.2 416.9 L1259.4 416.6 L1257.7 421.3 L1254.5 421.3Z"/><path d="M1280.4 430.9 L1295.3 422.2 L1296.2 425.7 L1286.5 433.5 L1282.2 434.1Z"/><path d="M1300.5 409.1 L1303.1 416.0 L1305.8 417.8 L1299.7 423.9 L1297.9 422.2 L1300.5 417.8Z"/><path d="M1297.0 377.6 L1301.4 382.0 L1300.5 382.8 L1296.5 378.8Z"/><path d="M834.9 297.1 L837.5 299.3 L836.1 300.6 L834.0 298.8Z"/><path d="M953.5 305.6 L960.3 306.2 L958.7 308.3 L954.0 307.7Z"/><path d="M946.6 306.7 L949.3 306.9 L948.7 307.7 L947.0 307.5Z"/><path d="M962.9 307.1 L965.0 307.3 L964.8 308.1 L963.1 307.9Z"/><path d="M948.4 293.6 L949.3 293.6 L950.1 296.2 L949.3 296.4Z"/><path d="M950.3 297.5 L951.6 297.5 L952.4 300.4 L951.4 300.6Z"/></g>
<g fill="#fff" stroke="#9db28a" stroke-width="0.6" stroke-linejoin="round"><path d="M1098.3 267.8 L1101.1 264.3 L1105.3 263.6 L1108.8 262.2 L1110.9 263.6 L1114.4 269.9 L1110.9 272.0 L1103.9 271.3 L1099.7 272.0 L1098.3 269.9Z"/><path d="M1122.5 263.6 L1125.6 260.5 L1129.3 261.5 L1127.7 266.8 L1129.8 268.3 L1133.0 269.9 L1131.9 274.1 L1133.0 278.3 L1128.8 277.8 L1126.7 274.1 L1124.6 268.3 L1122.5 265.7Z"/><path d="M1105.5 290.7 L1109.1 290.9 L1113.9 298.4 L1118.5 304.7 L1122.4 311.4 L1124.6 315.7 L1123.4 317.0 L1119.3 311.9 L1114.9 306.4 L1114.3 306.0 L1109.5 299.3Z"/><path d="M1128.8 290.9 L1131.9 289.8 L1135.1 293.8 L1140.3 295.9 L1142.9 297.2 L1138.4 298.7 L1134.0 296.3 L1130.0 294.2Z"/></g>
<g fill="#c4c4c4" stroke="#a6a6a6" stroke-width="0.6"><path d="M991.7 187.9 L997.2 187.3 L1003.4 181.8 L1009.5 181.8 L1011.3 184.2 L1014.4 183.6 L1018.0 183.0 L1021.7 180.6 L1024.2 182.4 L1029.1 180.6 L1037.6 181.8 L1041.3 184.2 L1034.0 185.5 L1031.5 187.3 L1038.9 186.7 L1042.5 188.5 L1051.7 188.5 L1045.0 194.0 L1043.1 197.1 L1045.6 200.2 L1042.5 205.0 L1040.1 207.5 L1037.6 208.7 L1042.5 208.7 L1040.7 211.2 L1036.4 210.6 L1041.3 214.2 L1034.0 219.7 L1025.4 221.0 L1019.3 225.9 L1014.4 229.5 L1010.7 236.9 L1008.9 235.6 L1003.4 229.5 L1002.1 224.6 L1003.4 218.5 L1001.5 214.2 L1005.2 212.4 L1003.4 208.7 L1004.6 205.0 L998.5 197.7 L992.3 195.9 L991.7 192.2 L994.8 191.6 L992.3 189.7Z"/><path d="M1229.6 262.8 L1234.5 257.9 L1236.9 256.7 L1235.7 262.8 L1233.2 267.1 L1230.8 265.3Z"/><path d="M1133.0 271.0 L1139.3 268.9 L1144.5 273.1 L1150.8 275.2 L1149.7 278.3 L1146.6 279.9 L1142.4 277.8 L1134.0 277.5 L1133.0 274.1Z"/><path d="M1124.2 320.0 L1135.9 318.2 L1135.2 323.6 L1121.8 338.5 L1121.0 331.4 L1129.7 324.4 L1124.5 321.2Z"/><path d="M980.0 329.1 L984.3 329.9 L984.0 333.4 L980.5 333.1Z"/><path d="M939.3 300.4 L946.1 299.9 L952.4 303.3 L951.9 304.6 L949.3 305.1 L945.1 302.0Z"/></g>
<g fill="none" stroke="#97a68b" stroke-width="1.25" stroke-linejoin="round"><path d="M905.7 191.5 L891.7 214.2 L893.4 217.7 L896.9 222.9 L897.8 229.1"/><path d="M900.4 245.7 L924.9 249.2 L942.4 252.7 L949.4 257.9 L950.2 260.0"/><path d="M948.5 267.0 L952.9 263.5 L959.9 262.6 L966.0 260.0"/><path d="M900.0 280.5 L910.5 282.6 L916.8 286.8 L920.4 292.5"/><path d="M925.2 306.2 L926.2 309.8 L930.4 308.8"/><path d="M928.3 310.9 L934.6 311.9"/><path d="M930.4 314.0 L936.7 314.0"/><path d="M935.6 319.3 L938.8 319.3"/><path d="M954.1 318.6 L956.4 329.5 L962.0 336.4"/><path d="M960.9 336.4 L972.3 331.8 L974.5 327.3"/><path d="M972.7 329.5 L975.7 335.2"/><path d="M981.8 330.7 L984.1 334.5"/><path d="M940.5 342.0 L951.8 340.9 L954.1 347.7 L962.0 348.2"/><path d="M954.1 347.7 L960.9 354.5 L959.1 366.4"/><path d="M959.8 354.5 L972.3 359.1 L974.5 368.2 L970.0 370.9 L960.9 369.3"/><path d="M970.0 368.2 L979.1 370.5 L981.4 377.3 L974.5 375.0"/><path d="M960.9 369.3 L962.0 390.9 L964.3 406.8 L967.7 422.7"/><path d="M981.4 377.3 L983.6 384.1 L988.2 384.1"/><path d="M962.0 336.4 L965.5 343.2 L976.8 339.8 L988.2 335.9"/><path d="M1058.3 284.0 L1058.1 288.2 L1051.0 292.8 L1048.9 296.8 L1043.6 297.6 L1041.7 301.5 L1040.5 304.9 L1035.8 305.2"/><path d="M1048.9 296.8 L1051.5 299.1 L1066.7 308.3 L1076.1 302.0 L1082.9 302.2 L1095.0 307.5"/><path d="M1071.9 282.1 L1074.2 289.6 L1075.1 298.9 L1076.1 302.0"/><path d="M1096.0 288.4 L1095.5 307.5"/><path d="M1095.5 303.6 L1110.0 303.6"/><path d="M1051.5 299.1 L1052.2 313.8 L1043.6 314.6 L1036.3 313.5"/><path d="M1052.2 313.8 L1060.4 314.6 L1066.7 315.1 L1066.7 308.3"/><path d="M1066.7 315.1 L1067.5 316.7 L1075.1 316.9 L1080.3 316.2 L1083.5 308.3 L1082.9 302.2"/><path d="M1095.0 307.5 L1093.9 319.8 L1099.2 326.1 L1110.0 329.3"/><path d="M1080.3 316.7 L1081.9 318.3 L1082.4 324.0 L1075.1 332.4"/><path d="M1082.4 324.0 L1092.9 320.4"/><path d="M1043.6 314.6 L1044.7 319.8 L1039.4 321.9"/><path d="M1051.0 314.6 L1048.9 320.9 L1040.5 324.0"/><path d="M1055.7 314.6 L1054.1 320.9 L1056.2 328.2"/><path d="M1060.4 315.1 L1061.4 320.9 L1061.4 327.7"/><path d="M1064.6 316.7 L1064.6 326.1"/><path d="M1086.6 332.4 L1103.4 330.3"/><path d="M1080.5 320.0 L1082.6 328.4 L1082.1 333.6 L1084.7 337.8 L1081.5 344.1"/><path d="M1070.0 328.4 L1076.3 326.3 L1082.6 328.4 L1088.9 326.3 L1095.2 320.0"/><path d="M1088.9 326.3 L1091.0 330.0 L1100.4 330.0 L1104.6 332.6 L1103.5 341.0 L1105.6 349.4 L1102.5 352.5 L1104.6 355.6"/><path d="M1095.2 320.0 L1099.4 327.3 L1104.6 329.4 L1111.9 328.4 L1113.0 320.0"/><path d="M1111.9 328.4 L1121.4 332.6"/><path d="M1111.9 329.4 L1114.0 331.5 L1111.9 337.8 L1119.3 342.0"/><path d="M1105.6 337.8 L1111.9 337.8"/><path d="M1080.0 346.2 L1085.7 345.7 L1091.0 347.3 L1092.5 351.4 L1102.5 352.5"/><path d="M1092.5 351.4 L1093.1 360.9 L1078.4 360.9"/><path d="M1093.1 360.9 L1101.4 361.9 L1106.2 359.8 L1107.7 354.6 L1104.6 355.6"/><path d="M1109.8 350.4 L1111.9 351.4 L1114.0 359.8 L1111.9 366.1"/><path d="M1111.9 351.4 L1120.3 352.5"/><path d="M1091.0 361.9 L1088.9 374.5 L1089.9 380.0"/><path d="M1100.4 361.9 L1098.3 369.3 L1092.0 375.6"/><path d="M1099.4 364.0 L1105.6 361.9 L1107.7 368.2 L1104.6 369.3 L1100.4 364.0"/><path d="M1104.6 369.3 L1106.7 374.5 L1107.7 380.0"/><path d="M1089.1 363.5 L1089.9 377.5"/><path d="M1089.9 367.0 L1096.9 370.5 L1107.4 374.0"/><path d="M1098.7 380.1 L1102.2 379.6 L1102.5 382.4 L1099.0 382.7 L1098.7 380.1"/><path d="M1076.0 232.0 L1075.3 239.7 L1073.9 242.5"/><path d="M1069.0 249.8 L1068.6 255.1 L1070.0 260.0 L1072.5 262.8"/><path d="M1078.8 249.5 L1079.5 255.1 L1077.4 257.2 L1083.0 258.6"/><path d="M1069.7 262.8 L1075.3 262.1 L1078.1 261.4 L1085.8 260.0"/><path d="M1090.0 248.8 L1090.7 253.0 L1091.4 257.2"/><path d="M1079.5 255.1 L1084.4 257.9 L1091.4 257.2"/><path d="M1085.8 260.0 L1090.0 259.3 L1091.4 257.2"/><path d="M1085.1 262.8 L1088.6 262.8 L1090.0 259.3"/><path d="M1089.3 261.4 L1096.3 260.0 L1098.4 264.9 L1092.1 267.0 L1088.6 263.5"/><path d="M1088.6 239.0 L1094.9 239.0"/><path d="M1087.2 243.2 L1094.2 243.2"/><path d="M1086.5 246.7 L1093.5 246.0"/><path d="M1091.4 246.0 L1101.2 249.5 L1099.8 253.7 L1091.4 254.4"/><path d="M1101.2 249.5 L1104.0 252.3 L1112.3 255.8 L1110.9 261.4 L1104.0 264.2 L1098.4 260.0"/><path d="M1096.3 232.0 L1094.2 237.6 L1095.6 239.7 L1094.2 243.9 L1093.5 246.0"/><path d="M1065.5 253.0 L1069.0 253.0"/><path d="M1064.1 256.5 L1069.0 256.5"/><path d="M1069.0 262.1 L1073.2 263.5"/><path d="M1069.0 262.8 L1069.7 268.4"/><path d="M1078.1 262.1 L1081.6 265.6 L1084.4 268.4 L1087.9 272.0"/><path d="M1085.1 262.8 L1085.8 267.0 L1091.4 268.4"/><path d="M1091.4 267.0 L1094.2 272.0"/><path d="M1076.0 244.9 L1075.3 238.6 L1076.0 231.6 L1079.5 224.6 L1084.4 219.0 L1088.6 215.5 L1092.8 214.1"/><path d="M1089.3 226.0 L1087.9 221.8 L1088.6 216.2 L1092.8 214.1"/><path d="M1092.8 214.1 L1094.2 219.0 L1096.3 226.0 L1097.0 233.0 L1095.6 237.2"/><path d="M1048.0 269.2 L1055.0 269.5 L1057.1 274.1 L1058.5 281.1"/><path d="M1055.0 269.5 L1062.0 269.9 L1065.5 270.2"/><path d="M1120.8 252.4 L1128.1 254.5 L1140.0 252.4"/><path d="M1108.9 280.4 L1116.2 278.3 L1121.4 277.3 L1125.6 277.3"/><path d="M1115.2 271.0 L1121.4 272.0 L1125.6 275.2"/><path d="M1111.0 267.8 L1120.4 267.8 L1124.6 269.9"/><path d="M1120.4 255.2 L1121.4 260.5 L1122.5 263.6"/><path d="M1128.8 263.6 L1134.0 263.6 L1147.7 265.7 L1152.9 268.9 L1156.0 265.7 L1167.6 264.7"/><path d="M1120.4 254.2 L1138.2 250.0"/><path d="M1121.4 277.3 L1123.5 284.6 L1127.7 289.8"/><path d="M1144.5 277.3 L1145.6 285.6 L1148.7 290.9 L1148.7 295.1"/><path d="M1152.9 276.2 L1158.1 275.2 L1159.2 281.4 L1152.9 284.6 L1148.7 291.9"/><path d="M1163.4 280.4 L1165.5 285.6 L1161.3 294.0 L1162.3 299.3"/><path d="M1109.9 287.7 L1118.3 291.9 L1128.8 291.9"/><path d="M1109.9 287.7 L1111.0 294.0"/><path d="M1122.5 306.6 L1136.1 304.5 L1140.3 299.3"/><path d="M1167.6 266.8 L1163.4 274.1 L1165.5 279.4 L1170.0 281.4"/><path d="M1150.0 243.9 L1156.1 243.9 L1162.2 248.8 L1169.6 250.0 L1174.5 251.8 L1178.2 248.2 L1185.5 249.4 L1186.7 244.5 L1194.1 246.9 L1202.6 247.5 L1207.5 245.1 L1213.6 245.7 L1213.6 238.4 L1219.8 236.5 L1223.4 239.6 L1230.8 245.7 L1235.7 243.9 L1235.7 253.0 L1234.5 256.7"/><path d="M1174.5 251.8 L1180.6 259.2 L1190.4 262.8 L1201.4 262.8 L1211.2 256.7 L1217.3 250.0 L1212.4 248.8 L1213.6 245.7"/><path d="M1174.5 251.8 L1168.4 257.9 L1168.4 264.1 L1159.8 265.3 L1157.3 269.0 L1153.7 270.2"/><path d="M1164.7 278.8 L1174.5 287.3 L1196.5 287.3"/><path d="M1137.8 250.0 L1150.0 243.9"/><path d="M1171.0 282.2 L1174.7 288.4 L1184.5 292.0 L1191.8 289.6 L1196.7 287.1 L1200.4 293.3 L1204.1 299.4"/><path d="M1173.5 287.1 L1185.7 292.6"/><path d="M1186.9 293.3 L1189.4 300.6"/><path d="M1201.6 298.2 L1206.5 299.4 L1213.9 299.4"/><path d="M1209.0 298.2 L1213.9 306.7 L1217.5 311.6"/><path d="M1202.8 304.3 L1210.2 310.4 L1215.1 312.8"/><path d="M1200.4 301.8 L1204.1 310.4 L1205.3 319.0"/><path d="M1160.0 274.9 L1166.1 281.0 L1164.9 292.0 L1160.0 298.2"/><path d="M1268.2 341.3 L1269.1 350.9"/></g>
<g fill="#a9c48f">
<circle cx="827.9" cy="222.1" r="0.7"/>
<circle cx="833.1" cy="224.3" r="0.7"/>
<circle cx="837.5" cy="224.7" r="0.7"/>
<circle cx="846.2" cy="223.8" r="0.7"/>
<circle cx="850.6" cy="222.1" r="0.7"/>
<circle cx="828.7" cy="291.5" r="0.7"/>
<circle cx="830.8" cy="293.6" r="0.7"/>
<circle cx="1018.4" cy="276.1" r="0.7"/>
<circle cx="965.1" cy="307.6" r="0.7"/>
<circle cx="968.3" cy="310.7" r="0.7"/>
<circle cx="970.7" cy="315.9" r="0.7"/>
<circle cx="1022.1" cy="275.7" r="0.7"/>
<circle cx="1026.1" cy="279.2" r="0.7"/>
<circle cx="1036.6" cy="285.3" r="0.7"/>
<circle cx="1035.7" cy="293.2" r="0.7"/>
<circle cx="1026.1" cy="312.4" r="0.7"/>
<circle cx="1027.9" cy="315.9" r="0.7"/>
<circle cx="1070.7" cy="335.2" r="0.7"/>
<circle cx="1166.9" cy="328.2" r="0.7"/>
<circle cx="1167.7" cy="333.4" r="0.7"/>
<circle cx="1142.4" cy="342.2" r="0.7"/>
<circle cx="1138.9" cy="346.5" r="0.7"/>
<circle cx="1126.6" cy="352.7" r="0.7"/>
<circle cx="837.5" cy="369.1" r="0.7"/>
<circle cx="841.0" cy="370.5" r="0.7"/>
<circle cx="984.3" cy="422.1" r="0.7"/>
<circle cx="960.7" cy="406.3" r="0.7"/>
<circle cx="1304.9" cy="366.2" r="0.7"/>
<circle cx="1305.8" cy="375.0" r="0.7"/>
<circle cx="1318.9" cy="374.1" r="0.7"/>
<circle cx="1290.9" cy="350.5" r="0.7"/>
<circle cx="1294.4" cy="354.0" r="0.7"/>
<circle cx="1297.9" cy="357.5" r="0.7"/>
<circle cx="1250.7" cy="333.4" r="0.7"/>
<circle cx="1252.4" cy="340.4" r="0.7"/>
<circle cx="1287.4" cy="350.9" r="0.7"/>
<circle cx="1294.4" cy="354.4" r="0.7"/>
<circle cx="1142.3" cy="342.0" r="0.7"/>
<circle cx="1143.4" cy="345.2" r="0.7"/>
<circle cx="1138.7" cy="346.7" r="0.7"/>
<circle cx="1126.6" cy="353.5" r="0.7"/>
<circle cx="1140.2" cy="368.7" r="0.7"/>
<circle cx="1143.9" cy="367.7" r="0.7"/>
</g></svg>
<div class="abs" style="left:824px;top:495px;width:479px;height:34px;border:1.3px solid #111;background:#fff"></div>
<div class="abs" style="left:831px;top:502px;width:1px;height:20px;background:#333"></div>
<div class="abs" style="left:831px;top:503.7px;font-size:14.7px;color:#8f8f8f">Chose Regulations.....</div>

<div id="bottomframe"></div>
<div class="abs" style="left:0;top:0;width:1333px;height:1px;background:#8a8a8a"></div>
<div class="abs" style="left:0;top:0;width:1px;height:572px;background:#8a8a8a"></div>
<div class="abs" style="left:1332px;top:0;width:1px;height:572px;background:#8a8a8a"></div>
<div class="abs" style="left:0;top:571px;width:1333px;height:1px;background:#9a9a9a"></div>

</div></body></html>
